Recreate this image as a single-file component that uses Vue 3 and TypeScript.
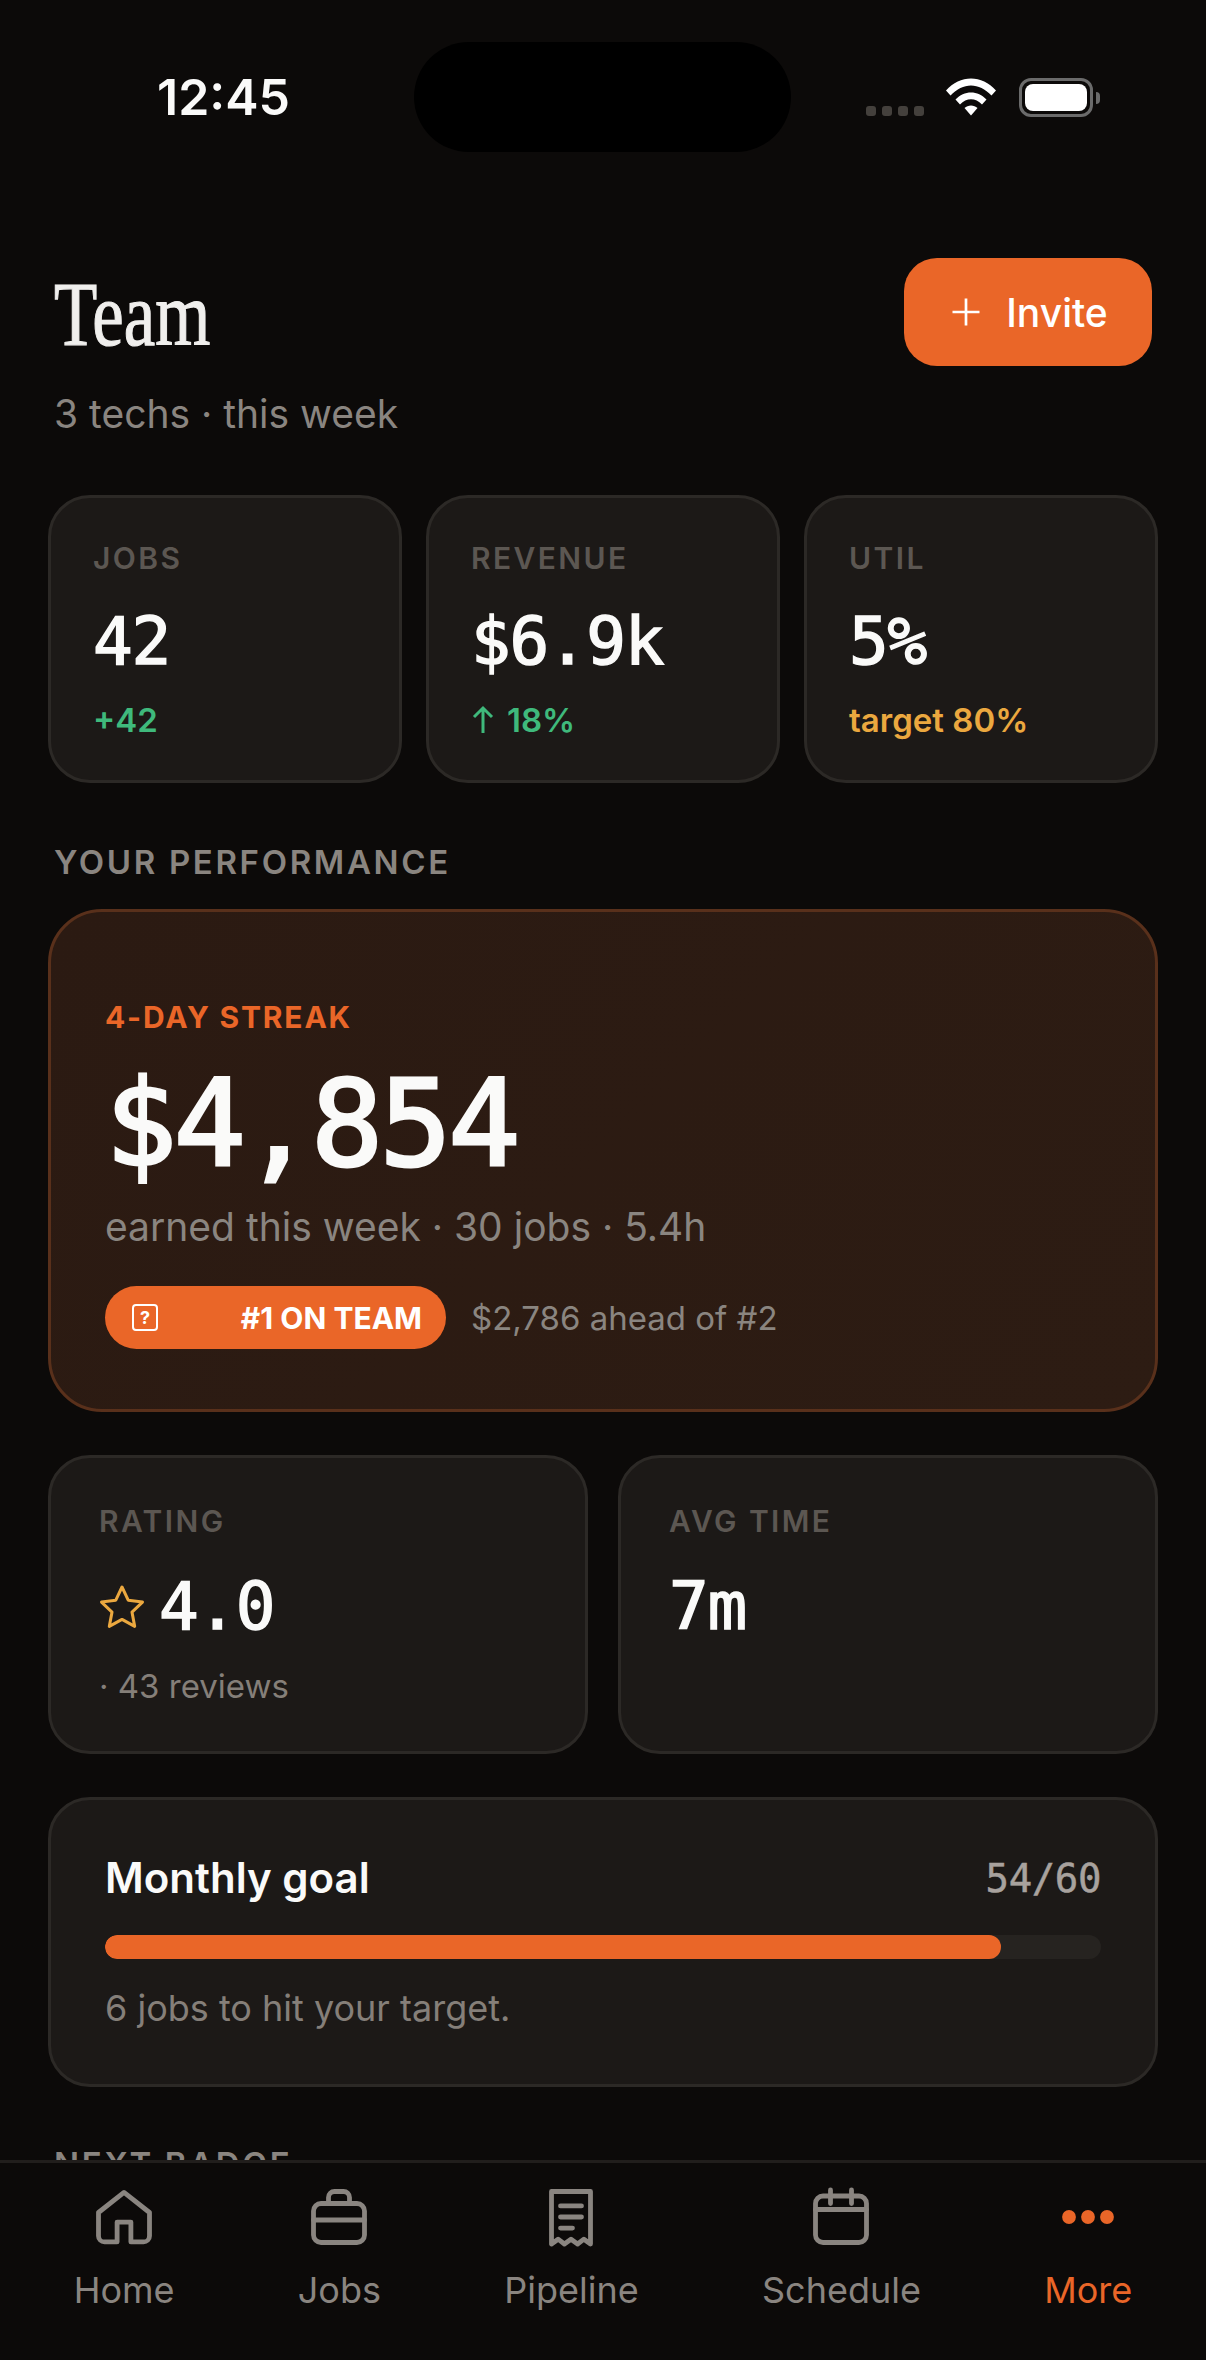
<script setup lang="ts">
interface Stat {
  label: string
  value: string
  note: string
  tone: string
  arrow?: boolean
}

const stats: Stat[] = [
  { label: 'JOBS', value: '42', note: '+42', tone: 'green' },
  { label: 'REVENUE', value: '$6.9k', note: '18%', tone: 'green', arrow: true },
  { label: 'UTIL', value: '5%', note: 'target 80%', tone: 'amber' },
]

const tabs = ['Home', 'Jobs', 'Pipeline', 'Schedule', 'More']
const goalPct = 90
</script>

<template>
  <div class="phone">
    <div class="content">
      <div class="status">
        <span class="time">12:45</span>
        <div class="island"></div>
        <div class="status-icons">
          <div class="signal"><i></i><i></i><i></i><i></i></div>
          <svg class="wifi" viewBox="0 0 50 38" fill="#fff">
            <path d="M0 12.5C14-3.5 36-3.5 50 12.5l-4.5 5C33 4 17 4 4.500 17.500z" />
            <path d="M9.500 21.500C18 12 32 12 40.500 21.500l-4.500 5C29.500 19.500 20.500 19.500 14 26.500z" />
            <path d="M18.500 30c3.500-3.500 9.500-3.500 13 0L25 37.500z" />
          </svg>
          <div class="battery"><div class="battery-fill"></div></div>
          <div class="battery-cap"></div>
        </div>
      </div>

      <header class="head">
        <div>
          <h1 class="title">Team</h1>
          <p class="sub">3 techs · this week</p>
        </div>
        <button class="invite">
          <svg viewBox="0 0 24 24" class="plus"><path d="M12 3v18M3 12h18" /></svg>
          Invite
        </button>
      </header>

      <section class="stats">
        <div v-for="s in stats" :key="s.label" class="card stat">
          <div class="label">{{ s.label }}</div>
          <div class="value">{{ s.value }}</div>
          <div class="note" :class="s.tone">
            <svg v-if="s.arrow" class="arrow" viewBox="0 0 24 30"><path d="M12 28V3M3 12l9-9 9 9" /></svg>
            {{ s.note }}
          </div>
        </div>
      </section>

      <h2 class="section">YOUR PERFORMANCE</h2>

      <section class="hero">
        <div class="streak">4-DAY STREAK</div>
        <div class="hero-value">$4,854</div>
        <p class="hero-sub">earned this week · 30 jobs · 5.4h</p>
        <div class="rank">
          <span class="pill">
            <span class="tofu">?</span>
            <span>#1 ON TEAM</span>
          </span>
          <span class="ahead">$2,786 ahead of #2</span>
        </div>
      </section>

      <section class="pair">
        <div class="card half">
          <div class="label">RATING</div>
          <div class="value rating">
            <svg class="star" viewBox="0 0 46 46">
              <path d="M23 3l6.200 13.200 14.300 1.900-10.500 10 2.700 14.300L23 35.400 10.300 42.400 13 28.100 2.500 18.100l14.300-1.900z" />
            </svg>
            4.0
          </div>
          <div class="reviews">· 43 reviews</div>
        </div>
        <div class="card half">
          <div class="label">AVG TIME</div>
          <div class="value">7m</div>
        </div>
      </section>

      <section class="card goal">
        <div class="goal-top">
          <span class="goal-name">Monthly goal</span>
          <span class="goal-count">54/60</span>
        </div>
        <div class="track"><div class="fill" :style="{ width: goalPct + '%' }"></div></div>
        <p class="goal-note">6 jobs to hit your target.</p>
      </section>

      <h2 class="section next">NEXT BADGE</h2>
    </div>

    <nav class="tabs">
      <div v-for="(t, i) in tabs" :key="t" class="tab" :class="{ active: t === 'More' }">
        <svg class="tab-icon" viewBox="0 0 24 24">
          <path v-if="i === 0" d="M3.500 10.500 12 3.800l8.500 6.700v7.800a2 2 0 0 1-2 2h-4.200v-6.600H9.700v6.600H5.500a2 2 0 0 1-2-2z" />
          <g v-else-if="i === 1">
            <rect x="3.500" y="7.500" width="17" height="13" rx="2.500" />
            <path d="M8.500 7.500V5.500a2 2 0 0 1 2-2h3a2 2 0 0 1 2 2v2M3.500 13h17" />
          </g>
          <g v-else-if="i === 2">
            <path d="M5.500 3.500h13V21l-2.200-1.600L14.200 21 12 19.400 9.800 21l-2.100-1.600L5.500 21z" />
            <path d="M8.500 8.300h7M8.500 12h7M8.500 15.700h4" />
          </g>
          <g v-else-if="i === 3">
            <rect x="3.500" y="5" width="17" height="15.500" rx="2.500" />
            <path d="M3.500 9.500h17M8.500 3v4.500M15.500 3v4.500" />
          </g>
          <g v-else class="dots">
            <circle cx="5.670" cy="12" r="2.300" />
            <circle cx="12" cy="12" r="2.300" />
            <circle cx="18.330" cy="12" r="2.300" />
          </g>
        </svg>
        <span>{{ t }}</span>
      </div>
    </nav>
  </div>
</template>

<style scoped>
.phone {
  width: 1206px;
  height: 2360px;
  display: flex;
  flex-direction: column;
  overflow: hidden;
  background: #0c0a09;
  color: #fafaf9;
  font-family: Inter, "Liberation Sans", sans-serif;
}

.content {
  flex: 1;
  min-height: 0;
  overflow: hidden;
  padding: 0 48px;
}

.status {
  height: 152px;
  margin: 0 -48px;
  padding: 42px 106px 0 157px;
  display: flex;
  justify-content: space-between;
  position: relative;
}

.time {
  font-size: 50px;
  font-weight: 600;
  line-height: 110px;
}

.island {
  position: absolute;
  left: 414px;
  top: 42px;
  width: 377px;
  height: 110px;
  border-radius: 55px;
  background: #000;
}

.status-icons {
  display: flex;
  align-items: flex-start;
  padding-top: 36px;
}

.signal {
  display: flex;
  gap: 6px;
  margin-top: 28px;
  margin-right: 22px;
}

.signal i {
  width: 10px;
  height: 10px;
  border-radius: 3px;
  background: #44403c;
}

.wifi {
  width: 50px;
  height: 38px;
  margin-right: 23px;
}

.battery {
  width: 74px;
  height: 39px;
  padding: 3px;
  border: 3px solid #6b6b6b;
  border-radius: 12px;
  box-sizing: border-box;
}

.battery-fill {
  height: 100%;
  border-radius: 8px;
  background: #fff;
}

.battery-cap {
  width: 4px;
  height: 12px;
  margin: 14px 0 0 3px;
  border-radius: 0 4px 4px 0;
  background: #6b6b6b;
}

.head {
  display: flex;
  justify-content: space-between;
  align-items: flex-start;
  padding: 106px 6px 0;
  margin-top: -42px;
}

.title {
  margin: 0;
  font-family: "Liberation Serif", serif;
  font-size: 92px;
  font-weight: 400;
  line-height: 112px;
  color: #f0efed;
  -webkit-text-stroke: 1.2px #f0efed;
  transform: scaleX(0.77);
  transform-origin: left;
}

.sub {
  margin: 17px 0 0;
  font-size: 39px;
  line-height: 54px;
  color: #8a8580;
}

.invite {
  width: 248px;
  height: 108px;
  display: flex;
  align-items: center;
  justify-content: center;
  gap: 22px;
  border: 0;
  border-radius: 33px;
  background: #ea6628;
  color: #fff;
  font: 500 39px Inter, sans-serif;
}

.plus {
  width: 36px;
  height: 36px;
  fill: none;
  stroke: #fff;
  stroke-width: 1.800;
}

.stats {
  margin-top: 54px;
  display: grid;
  grid-template-columns: repeat(3, 1fr);
  gap: 24px;
}

.card {
  box-sizing: border-box;
  background: #1c1917;
  border: 3px solid #2c2926;
  border-radius: 42px;
}

.stat {
  height: 288px;
  padding: 42px 42px 0;
}

.label {
  font-size: 30px;
  line-height: 36px;
  font-weight: 600;
  letter-spacing: 0.08em;
  color: #5c5752;
}

.value {
  margin-top: 27px;
  font-family: "DejaVu Sans Mono", monospace;
  font-size: 66px;
  line-height: 78px;
  font-weight: 400;
  letter-spacing: -0.02em;
  color: #fafaf9;
  -webkit-text-stroke: 1.5px #fafaf9;
}

.note {
  margin-top: 18px;
  display: flex;
  align-items: center;
  gap: 12px;
  font-size: 33px;
  line-height: 42px;
  font-weight: 600;
}

.green {
  color: #3fb97c;
}

.amber {
  color: #eba83f;
}

.arrow {
  width: 24px;
  height: 30px;
  fill: none;
  stroke: #3fb97c;
  stroke-width: 3;
}

.section {
  margin: 58px 6px 0;
  font-size: 33px;
  line-height: 42px;
  font-weight: 600;
  letter-spacing: 0.08em;
  color: #8a8580;
}

.hero {
  margin-top: 26px;
  height: 503px;
  box-sizing: border-box;
  padding: 87px 54px 0;
  border: 3px solid #59301b;
  border-radius: 54px;
  background: linear-gradient(135deg, #2b1a12, #2d1c13);
}

.streak {
  font-size: 30px;
  line-height: 36px;
  font-weight: 700;
  letter-spacing: 0.06em;
  color: #ea6628;
}

.hero-value {
  margin-top: 23px;
  font-family: "DejaVu Sans Mono", monospace;
  font-size: 120px;
  line-height: 132px;
  letter-spacing: -0.03em;
  -webkit-text-stroke: 3px #fafaf9;
}

.hero-sub {
  margin: 10px 0 0;
  font-size: 39px;
  line-height: 54px;
  color: #8a8580;
}

.rank {
  margin-top: 32px;
  display: flex;
  align-items: center;
  gap: 25px;
}

.pill {
  box-sizing: border-box;
  width: 341px;
  height: 63px;
  padding: 0 24px 0 27px;
  display: flex;
  align-items: center;
  justify-content: space-between;
  border-radius: 32px;
  background: #ea6628;
  color: #fff;
  font-size: 30px;
  font-weight: 700;
}

.tofu {
  box-sizing: border-box;
  width: 26px;
  height: 27px;
  display: flex;
  align-items: center;
  justify-content: center;
  border: 2px solid #fff;
  border-radius: 4px;
  font-size: 18px;
}

.ahead {
  font-size: 33px;
  color: #8a8580;
}

.pair {
  margin-top: 43px;
  display: grid;
  grid-template-columns: 1fr 1fr;
  gap: 30px;
}

.half {
  height: 299px;
  padding: 45px 48px 0;
}

.half .value {
  margin-top: 29px;
}

.rating {
  display: flex;
  align-items: center;
  gap: 14px;
}

.star {
  width: 46px;
  height: 46px;
  fill: none;
  stroke: #eba83f;
  stroke-width: 3;
  stroke-linejoin: round;
}

.reviews {
  margin-top: 19px;
  font-size: 33px;
  line-height: 42px;
  color: #857f79;
}

.goal {
  margin-top: 43px;
  height: 290px;
  padding: 51px 54px 0;
}

.goal-top {
  display: flex;
  justify-content: space-between;
  align-items: center;
}

.goal-name {
  font-size: 42px;
  line-height: 54px;
  font-weight: 600;
}

.goal-count {
  font-family: "DejaVu Sans Mono", monospace;
  font-size: 39px;
  letter-spacing: -0.01em;
  color: #a8a29e;
  -webkit-text-stroke: 0.5px #a8a29e;
}

.track {
  margin-top: 30px;
  height: 24px;
  border-radius: 12px;
  background: #262320;
  overflow: hidden;
}

.fill {
  height: 100%;
  border-radius: 12px;
  background: #ea6628;
}

.goal-note {
  margin: 25px 0 0;
  font-size: 36px;
  line-height: 48px;
  color: #857f79;
}

.next {
  margin-top: 56px;
}

.tabs {
  height: 200px;
  flex: none;
  box-sizing: border-box;
  padding: 18px 12px 0;
  display: flex;
  justify-content: space-around;
  align-items: flex-start;
  border-top: 3px solid #211e1c;
  background: #0c0a09;
}

.tab {
  display: flex;
  flex-direction: column;
  align-items: center;
  gap: 13px;
  font-size: 36px;
  line-height: 48px;
  color: #8a8580;
}

.tab.active {
  color: #ea6628;
}

.tab-icon {
  width: 72px;
  height: 72px;
  fill: none;
  stroke: #8a8580;
  stroke-width: 1.600;
  stroke-linejoin: round;
  stroke-linecap: round;
}

.dots {
  fill: #ea6628;
  stroke: none;
}
</style>
